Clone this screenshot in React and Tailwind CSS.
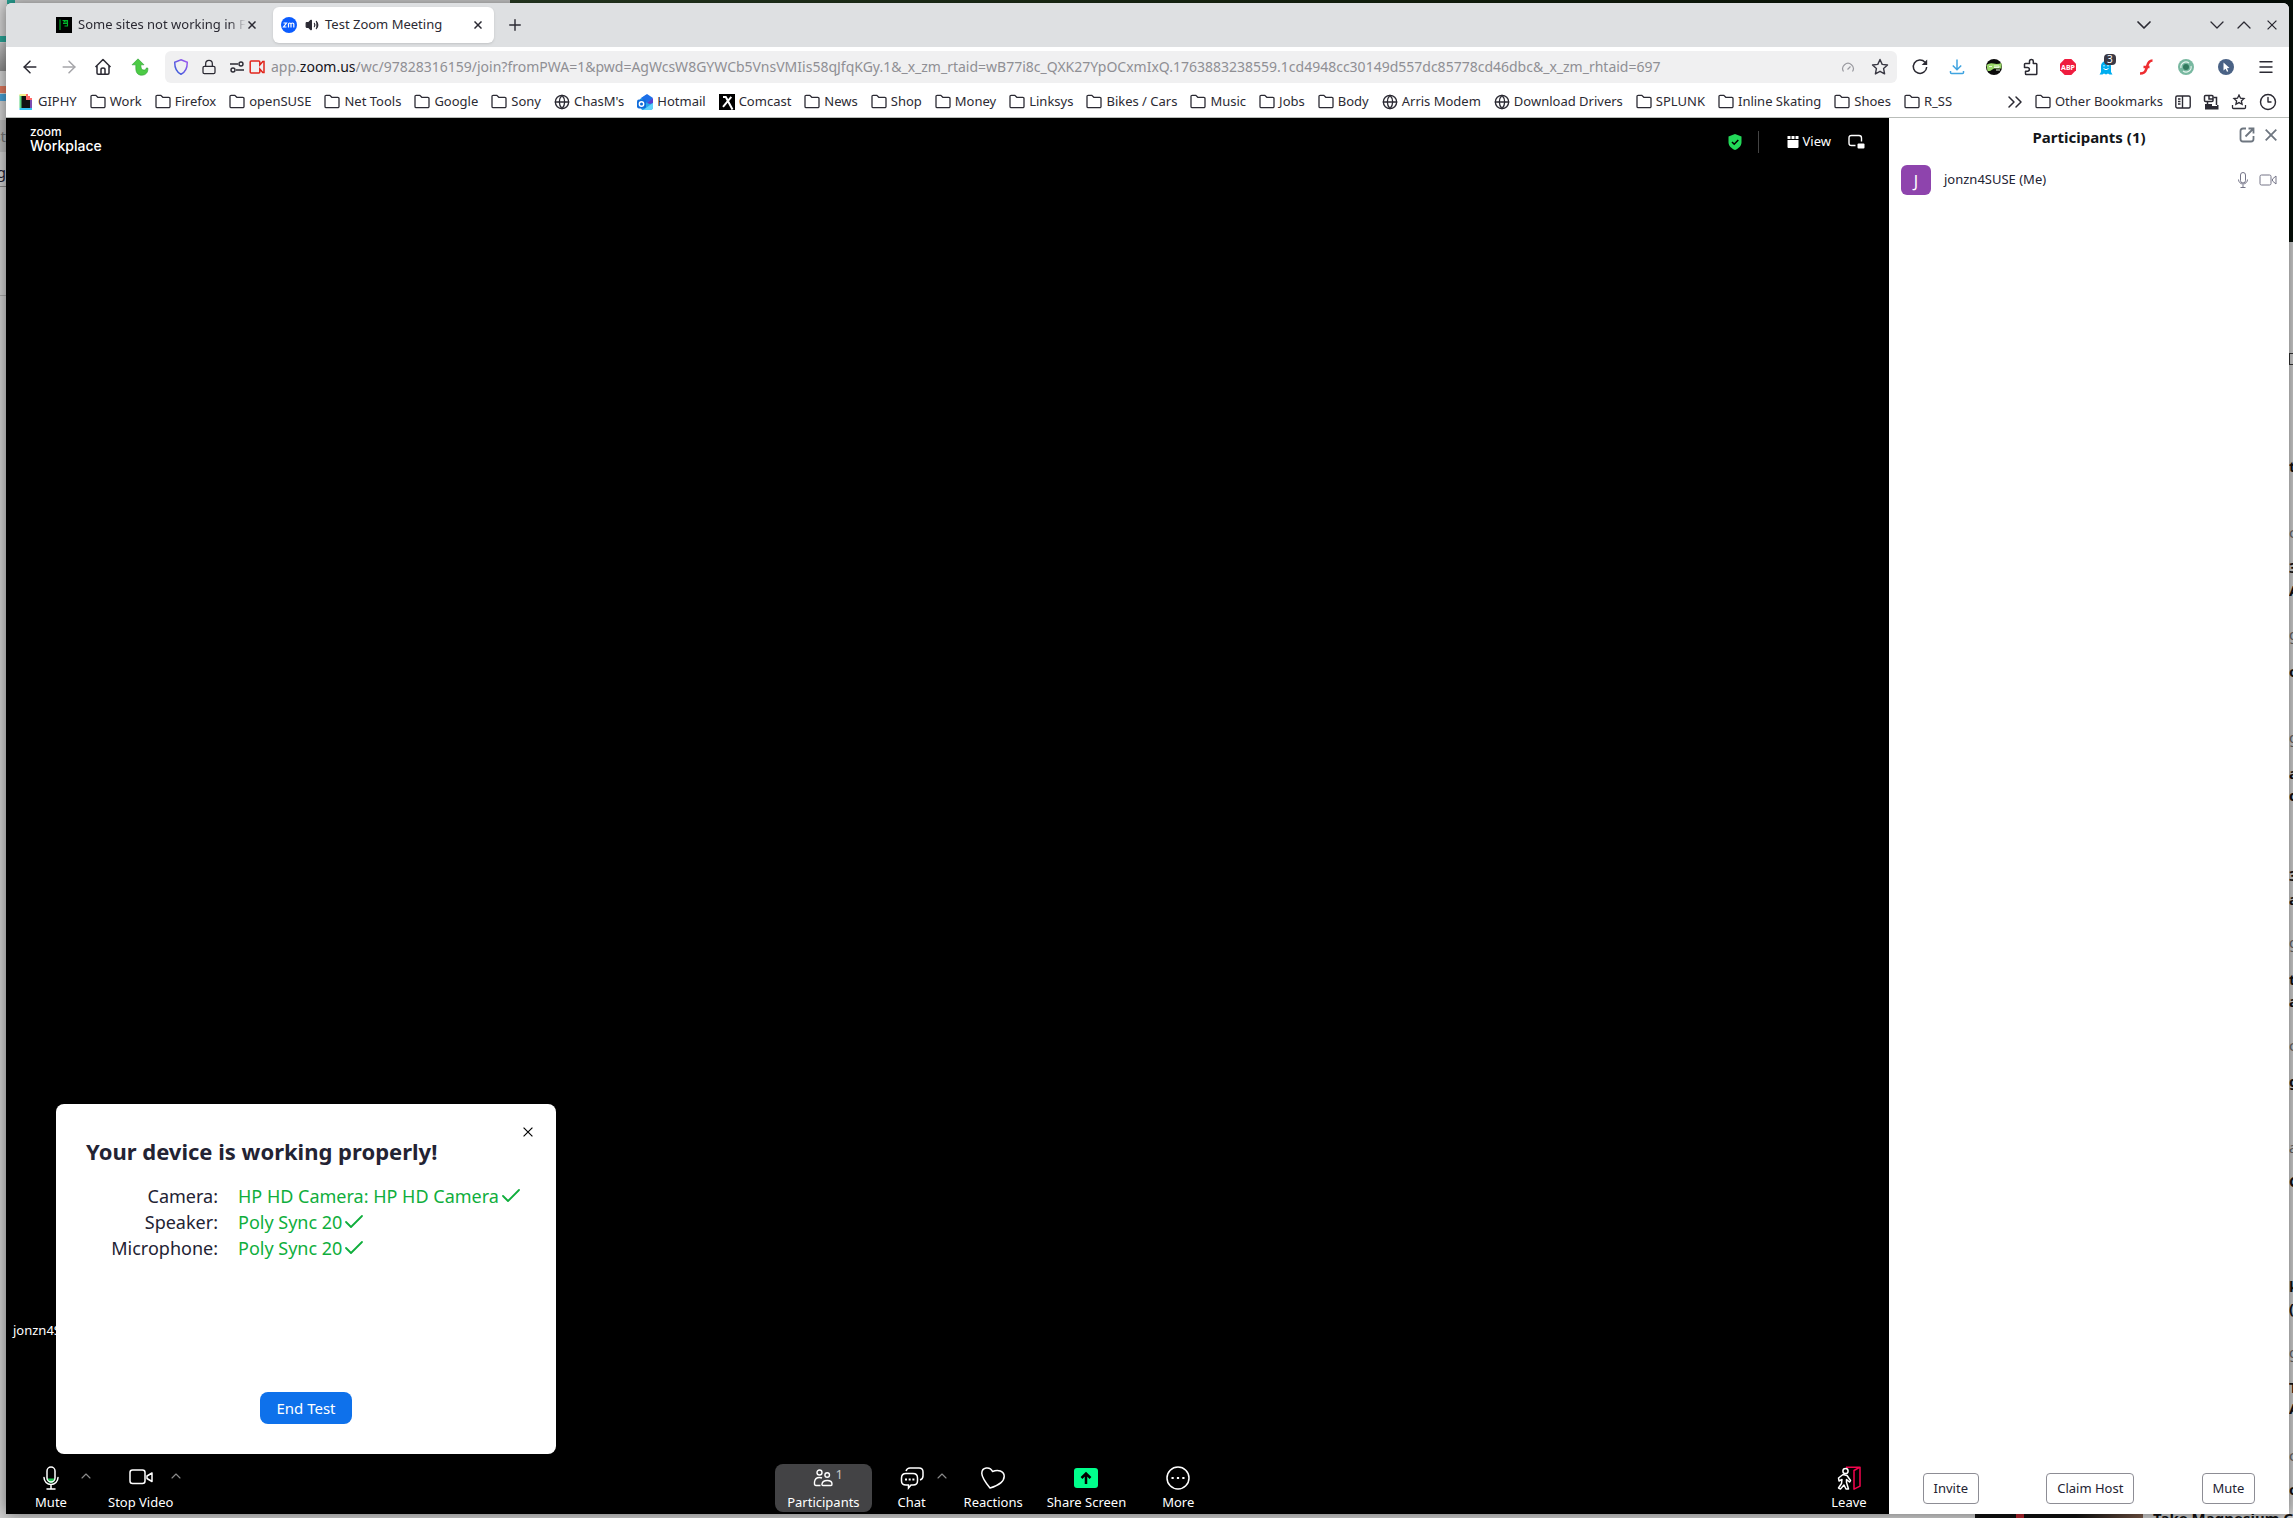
import React from 'react';
import {
  ArrowLeft,
  ArrowRight,
  ChevronDown,
  ChevronUp,
  ChevronsRight,
  Check,
  Clock3,
  Globe,
  Lock,
  Menu,
  Plus,
  Volume2,
} from 'lucide-react';

const BOOKMARKS = [
  { label: 'GIPHY', icon: 'giphy' },
  { label: 'Work' },
  { label: 'Firefox' },
  { label: 'openSUSE' },
  { label: 'Net Tools' },
  { label: 'Google' },
  { label: 'Sony' },
  { label: "ChasM's", icon: 'globe' },
  { label: 'Hotmail', icon: 'hotmail' },
  { label: 'Comcast', icon: 'comcast' },
  { label: 'News' },
  { label: 'Shop' },
  { label: 'Money' },
  { label: 'Linksys' },
  { label: 'Bikes / Cars' },
  { label: 'Music' },
  { label: 'Jobs' },
  { label: 'Body' },
  { label: 'Arris Modem', icon: 'globe' },
  { label: 'Download Drivers', icon: 'globe' },
  { label: 'SPLUNK' },
  { label: 'Inline Skating' },
  { label: 'Shoes' },
  { label: 'R_SS' },
];

const DEVICES = [
  { label: 'Camera:', value: 'HP HD Camera: HP HD Camera' },
  { label: 'Speaker:', value: 'Poly Sync 20' },
  { label: 'Microphone:', value: 'Poly Sync 20' },
];

const URL_PATH =
  '/wc/97828316159/join?fromPWA=1&pwd=AgWcsW8GYWCb5VnsVMIis58qJfqKGy.1&_x_zm_rtaid=wB77i8c_QXK27YpOCxmIxQ.1763883238559.1cd4948cc30149d557dc85778cd46dbc&_x_zm_rhtaid=697';

// text of the window behind, as far as it sticks out on the right: [letter, top, bold]
const BEHIND = [
  ['t', 466, true],
  ['c', 532],
  ['3', 567, true],
  ['A', 590, true],
  ['g', 634],
  ['o', 671, true],
  ['g', 737],
  ['a', 773, true],
  ['d', 795, true],
  ['3', 875, true],
  ['a', 899, true],
  ['g', 942],
  ['t', 979, true],
  ['a', 1001, true],
  ['c', 1045],
  ['g', 1081, true],
  ['a', 1147],
  ['C', 1181, true],
  ['k', 1286, true],
  ['(', 1308, true],
  ['g', 1352],
  ['T', 1387, true],
  ['A', 1408, true],
  ['c', 1455],
  ['o', 1489, true],
];

const Cross = ({ className, strokeWidth = 1.4 }) => (
  <svg className={className} viewBox="0 0 12 12" fill="none" stroke="currentColor" strokeWidth={strokeWidth}>
    <path d="M.7.7l10.600 10.600M11.300.7L.7 11.300" />
  </svg>
);

const Folder = () => (
  <svg className="size-4 shrink-0" viewBox="0 0 16 16" fill="none" stroke="#2b2a33" strokeWidth="1.300">
    <path d="M1 12.500v-10A1.200 1.200 0 0 1 2.200 1.300h3.600l2 2h6A1.200 1.200 0 0 1 15 4.500v8a1.200 1.200 0 0 1-1.200 1.200H2.200A1.200 1.200 0 0 1 1 12.500z" />
  </svg>
);

const Star = () => (
  <svg className="size-[18px]" viewBox="0 0 18 18" fill="none" stroke="#3a3944" strokeWidth="1.400" strokeLinejoin="round">
    <path d="M9 1.500l2.200 4.900 5.300.6-3.900 3.600 1 5.300L9 13.300l-4.600 2.600 1-5.300L1.500 7l5.300-.6z" />
  </svg>
);

const BookmarkIcon = ({ type }) => {
  if (type === 'globe') return <Globe className="size-4 shrink-0" strokeWidth={2} />;
  if (type === 'giphy') {
    return (
      <svg className="size-4 shrink-0" viewBox="0 0 16 16">
        <path fill="#111" d="M3 2h6v4h4v8H3z" />
        <path fill="#5bd37f" d="M1.500 1h2v13h-2z" />
        <path fill="#f6f08a" d="M1.500 0h7v2h-7z" />
        <path fill="#ff6a6a" d="M8 0h2v2h2v2h2v2H8z" />
        <path fill="#7b4bb0" d="M12 6h2v9h-2z" />
        <path fill="#35c3f3" d="M1.500 14h12.500v2H1.500z" />
      </svg>
    );
  }
  if (type === 'hotmail') {
    return (
      <svg className="size-4 shrink-0" viewBox="0 0 16 16">
        <path fill="#28a8ea" d="M3 5l6-4 7 4v8q0 3-3 3H5L3 13z" />
        <path fill="#1d6fe8" d="M4 4l6-4 6 4-6 5z" />
        <path fill="#5b3fd0" d="M10 9l6-5v5l-3 1z" />
        <path fill="#62d2fb" d="M6 16l10-7v4q0 3-3 3z" />
        <rect fill="#0f6cdb" x="0" y="5.500" width="9" height="9" rx="2" />
        <circle cx="4.500" cy="10" r="2.200" fill="none" stroke="#fff" strokeWidth="1.400" />
      </svg>
    );
  }
  if (type === 'comcast') {
    return (
      <svg className="size-4 shrink-0" viewBox="0 0 16 16">
        <rect width="16" height="16" fill="#000" />
        <path d="M4 3h2.800l6.700 12.500M12.300 2.800L4 12.800" fill="none" stroke="#fff" strokeWidth="2" />
      </svg>
    );
  }
  return <Folder />;
};

const TabStrip = () => (
  <div className="flex h-11 shrink-0 items-center bg-[#dee0e2] pl-[50px] pr-3 text-[#2b2a33]">
    <div className="flex w-[217px] items-center gap-1.5">
      <svg className="size-4 shrink-0" viewBox="0 0 16 16">
        <rect width="16" height="16" fill="#000" />
        <path d="M4 2.500v10.500M6.500 3.500h2.500l-1 1.500h3.500M8.500 3.500h3v5.500h-3M7 6.500h4.500" fill="none" stroke="#00b52a" strokeWidth="1.100" />
      </svg>
      <span className="w-[168px] whitespace-nowrap [mask-image:linear-gradient(90deg,#000_90%,transparent_100%)]">
        Some sites not working in F
      </span>
      <button aria-label="Close tab" className="-ml-1">
        <Cross className="size-2" strokeWidth={2.200} />
      </button>
    </div>
    <div className="flex h-9 w-[221px] items-center gap-2 rounded-md bg-white pl-2 pr-3 shadow-sm">
      <svg className="size-4 shrink-0" viewBox="0 0 16 16">
        <circle cx="8" cy="8" r="8" fill="#0b5cff" />
        <path d="M2.500 6h3l-3 4h3M7.500 10.500V7q0-1 1.200-1t1.300 1v3.500M10 7q0-1 1.400-1T12.800 7v3.500" fill="none" stroke="#fff" strokeWidth="1.200" />
      </svg>
      <Volume2 className="size-3.5 shrink-0" fill="currentColor" strokeWidth={2} />
      <span className="-ml-0.5 grow whitespace-nowrap">Test Zoom Meeting</span>
      <button aria-label="Close tab">
        <Cross className="size-2" strokeWidth={2.200} />
      </button>
    </div>
    <button aria-label="New tab" className="ml-3">
      <Plus className="size-[18px]" strokeWidth={1.900} />
    </button>
    <div className="ml-auto flex items-center gap-[3px]">
      <button aria-label="List all tabs" className="mr-[46px]">
        <ChevronDown className="size-6" strokeWidth={1.700} />
      </button>
      <button aria-label="Minimize">
        <ChevronDown className="size-6" strokeWidth={1.300} />
      </button>
      <button aria-label="Maximize">
        <ChevronUp className="size-6" strokeWidth={1.300} />
      </button>
      <button aria-label="Close window" className="ml-2">
        <Cross className="size-2.5" strokeWidth={1.500} />
      </button>
    </div>
  </div>
);

const NavButton = ({ label, wide, children }) => (
  <button aria-label={label} className={`relative flex justify-center ${wide ? 'w-10' : 'w-[37px]'}`}>
    {children}
  </button>
);

const NavBar = () => (
  <div className="flex h-10 shrink-0 items-center bg-white pl-3.5 pr-[3px] text-[#2b2a33]">
    <div className="flex w-[145px] shrink-0 items-center justify-between pr-4">
      <button aria-label="Back">
        <ArrowLeft className="size-5" strokeWidth={1.800} />
      </button>
      <button aria-label="Forward" className="text-[#a5a5a9]">
        <ArrowRight className="size-5" strokeWidth={1.800} />
      </button>
      <button aria-label="Home" className="-ml-1">
        <svg className="size-[18px]" viewBox="0 0 18 18" fill="none" stroke="#2b2a33" strokeWidth="1.500" strokeLinejoin="round">
          <path d="M1.500 9L9 1.500 16.500 9M3 8v7q0 1.200 1.200 1.200h9.600q1.200 0 1.200-1.200V8M7 16v-4.500q0-1.500 2-1.500t2 1.500V16" />
        </svg>
      </button>
      <button aria-label="Go up">
        <svg className="size-[18px]" viewBox="0 0 18 18">
          <path d="M7 .8l6 6H9.800c0 3.500 1 5.200 3 5.200 1.500 0 2.400-.6 2.400-2h1.600c.6 4.500-2.200 7.200-6 7.200-4 0-6-2.500-6-7V6.800H1z" fill="#4ccb45" stroke="#2e9e35" strokeWidth=".6" />
        </svg>
      </button>
    </div>
    <div className="flex h-8 grow items-center rounded-md bg-[#f0f0f1] px-2">
      <div className="mr-1.5 flex shrink-0 items-center">
        <svg className="size-4" viewBox="0 0 16 16" fill="none" stroke="url(#shield)" strokeWidth="1.500">
          <defs>
            <linearGradient id="shield" x1="0" y1="1" x2="1" y2="0">
              <stop offset="0" stopColor="#2f5fd8" />
              <stop offset="1" stopColor="#a257f0" />
            </linearGradient>
          </defs>
          <path d="M8 .8l6.300 2.400c0 5.800-1.500 9.800-6.300 12-4.800-2.200-6.300-6.200-6.300-12z" />
        </svg>
        <Lock className="ml-3 size-4" strokeWidth={1.900} />
        <svg className="ml-3 size-4" viewBox="0 0 16 16" fill="none" stroke="#2b2a33" strokeWidth="1.400">
          <path d="M1 5h8M7 11h8" />
          <circle cx="12" cy="5" r="2" />
          <circle cx="4" cy="11" r="2" />
        </svg>
        <svg className="ml-1 size-4" viewBox="0 0 16 16" fill="none" stroke="#e1251b" strokeWidth="1.500">
          <path d="M2.200 2h7.600q1 0 1 1v3l3-3.500h1.200v11h-1.200l-3-3.500v3q0 1-1 1H2.200q-1 0-1-1V3q0-1 1-1z" />
        </svg>
      </div>
      <label htmlFor="address" className="whitespace-nowrap text-sm text-[#8f8f94]">
        app.<span className="text-[#15141a]">zoom.us</span>
      </label>
      <input id="address" type="text" defaultValue={URL_PATH} className="min-w-0 grow bg-transparent text-sm text-[#8f8f94] outline-none" />
      <svg className="mr-4 size-3.5 shrink-0" viewBox="0 0 14 14" fill="none" stroke="#9a9aa0" strokeWidth="1.200">
        <path d="M2.500 11.500a5.300 5.300 0 1 1 9 0M6.500 9.500l3-3" />
      </svg>
      <button aria-label="Bookmark this page">
        <Star />
      </button>
    </div>
    <div className="ml-1 flex shrink-0 items-center">
      <NavButton label="Reload">
        <svg className="size-[18px]" viewBox="0 0 18 18" fill="none" stroke="#2b2a33" strokeWidth="1.500">
          <path d="M14 4.200A6.700 6.700 0 1 0 15.700 9" />
          <path d="M16.200 1.500v5.500h-5.500z" fill="#2b2a33" stroke="none" />
        </svg>
      </NavButton>
      <NavButton label="Downloads">
        <svg className="size-4" viewBox="0 0 16 16" fill="none" stroke="#3fa3e0" strokeWidth="1.500">
          <path d="M8 .5v10M3.800 6.500L8 10.700l4.200-4.200M1.500 12v1.500q0 1 1 1h11q1 0 1-1V12" />
        </svg>
      </NavButton>
      <NavButton label="Session manager">
        <svg className="size-4" viewBox="0 0 16 16">
          <circle cx="8" cy="8" r="8" fill="#0b0b0b" />
          <path d="M.5 6q3-2.500 7-1.500t8-.5v5.500H8l-4 2.500H1.500z" fill="#9bd86a" />
          <path d="M3 7.500h3M8 7h5v1.500H8M10 11h4" fill="none" stroke="#e9f7df" />
        </svg>
      </NavButton>
      <NavButton label="Extensions">
        <svg className="size-[18px]" viewBox="0 0 18 18" fill="none" stroke="#2b2a33" strokeWidth="1.500" strokeLinejoin="round">
          <path d="M7.500 5.500V3.300a1.900 1.900 0 0 1 3.800 0v2.200H14q.8 0 .8.800v9.400q0 .8-.8.800H4.300q-.8 0-.8-.8v-2.500h2a1.900 1.900 0 0 0 0-3.800H2.500V6.300q0-.8.800-.8z" />
        </svg>
      </NavButton>
      <NavButton label="Adblock Plus">
        <svg className="size-4" viewBox="0 0 16 16">
          <path d="M4.700 0h6.600L16 4.700v6.600L11.300 16H4.700L0 11.300V4.700z" fill="#ef1c3f" />
          <text x="8" y="10.500" textAnchor="middle" fontSize="7" fontWeight="700" fill="#fff">
            ABP
          </text>
        </svg>
      </NavButton>
      <NavButton label="Ghostery" wide>
        <svg className="size-4" viewBox="0 0 16 16">
          <path d="M3 13V7a5 5 0 0 1 10 0v6l1.500 2.500h-3L10 14.500l-2 1-2-1-1.500 1h-3z" fill="#00aef0" />
          <path d="M5.500 9.500q2.500 2.500 5 0" fill="none" stroke="#fff" />
          <path d="M6 6v1.500M10 6v1.500" stroke="#fff" />
        </svg>
        <span className="absolute -top-[5px] left-[18px] rounded-sm bg-[#3a3944] px-[3px] text-[10px] leading-[11px] text-white">3</span>
      </NavButton>
      <NavButton label="Flash video downloader" wide>
        <svg className="size-4" viewBox="0 0 16 16" fill="none" stroke="#ee2c30" strokeWidth="2.600">
          <path d="M14.500 1.500c-5 0-5 5-6 8s-2 5-6.500 5M5.500 8h6" />
        </svg>
      </NavButton>
      <NavButton label="Sync" wide>
        <svg className="size-4" viewBox="0 0 16 16">
          <circle cx="8" cy="8" r="8" fill="#78b8a0" />
          <circle cx="8" cy="8" r="3" fill="#32795e" />
          <path d="M3 9a5 5 0 0 1 8-5M13 7a5 5 0 0 1-8 5" fill="none" stroke="#e4f3ed" strokeWidth="1.200" />
        </svg>
      </NavButton>
      <NavButton label="Pointer" wide>
        <svg className="size-4" viewBox="0 0 16 16">
          <circle cx="8" cy="8" r="8" fill="#4a6285" />
          <path d="M5.500 3.500l6 5.500-2.600.2 1.400 3-1.300.6-1.400-3-2.100 1.600z" fill="#fff" />
        </svg>
      </NavButton>
      <NavButton label="Menu" wide>
        <Menu className="size-[18px]" strokeWidth={1.900} />
      </NavButton>
    </div>
  </div>
);

const BookmarksBar = () => (
  <div className="flex h-[31px] shrink-0 items-center border-b border-[#b9bdb9] bg-white px-3 text-[#2b2a33]">
    <div className="flex gap-[13px]">
      {BOOKMARKS.map(({ label, icon }) => (
        <a key={label} href="#" className="flex items-center gap-1 whitespace-nowrap">
          <BookmarkIcon type={icon} />
          {label}
        </a>
      ))}
    </div>
    <div className="ml-auto flex items-center gap-3">
      <button aria-label="More bookmarks" className="-mr-1">
        <ChevronsRight className="size-6" strokeWidth={1.500} />
      </button>
      <a href="#" className="flex items-center gap-1 whitespace-nowrap">
        <Folder />
        Other Bookmarks
      </a>
      <button aria-label="Sidebar">
        <svg className="size-4" viewBox="0 0 16 16" fill="none" stroke="#2b2a33" strokeWidth="1.400">
          <rect x=".8" y="2" width="14.400" height="12" rx="1.500" />
          <path d="M7.500 2v12M3 5h2.500M3 7.500h2.500M3 10h2.500" />
        </svg>
      </button>
      <button aria-label="Containers">
        <svg className="size-4" viewBox="0 0 16 16" fill="none" stroke="#2b2a33" strokeWidth="1.500">
          <rect x="1.500" y="1.500" width="8.500" height="6" rx="1" />
          <path d="M6 1.500v3.500h4M10.500 3.500h3V11M4.500 8v3" />
          <path d="M2 10h7v2h5V11h1.500v4.500H2z" fill="#2b2a33" stroke="none" />
        </svg>
      </button>
      <button aria-label="Show bookmarks">
        <svg className="size-4" viewBox="0 0 16 16" fill="none" stroke="#2b2a33" strokeWidth="1.300">
          <path d="M8 1l1.500 3.200 3.500.4-2.600 2.300.7 3.400L8 8.600l-3.100 1.700.7-3.400L3 4.600l3.500-.4zM1.500 11v2.500q0 1 1 1h11q1 0 1-1V11" />
        </svg>
      </button>
      <button aria-label="History">
        <Clock3 className="size-[18px]" strokeWidth={1.900} />
      </button>
    </div>
  </div>
);

const MicIcon = () => (
  <svg className="h-6 w-5" viewBox="0 0 20 24" fill="none" stroke="#fff" strokeWidth="1.500" strokeLinecap="round">
    <path d="M6.500 12.500h7v1a3.500 3.500 0 0 1-7 0z" fill="#23c552" stroke="none" />
    <rect x="6" y="1" width="8" height="15" rx="4" />
    <path d="M3 11.500a7 7 0 0 0 14 0M10 19v4M6 23h8" />
  </svg>
);

const VideoIcon = () => (
  <svg className="h-6 w-6" viewBox="0 0 24 24" fill="none" stroke="#fff" strokeWidth="1.500" strokeLinejoin="round">
    <rect x="1" y="4" width="15" height="13.500" rx="2.500" />
    <path d="M18 10l5-3v8.500l-5-3z" />
  </svg>
);

const ToolButton = ({ label, active, children }) => (
  <button
    className={`flex h-12 min-w-20 shrink-0 flex-col items-center justify-between rounded-lg px-3 pb-0.5 pt-0.5 text-white ${
      active ? 'bg-[#434345]' : ''
    }`}
  >
    <span className="relative flex h-6 items-center">{children}</span>
    <span className="leading-4">{label}</span>
  </button>
);

// sits over the right edge of the button before it
const Caret = ({ label, className = '-ml-[18px] mr-0.5' }) => (
  <button aria-label={label} className={`relative mt-1 self-start text-[#8b8b8b] ${className}`}>
    <ChevronUp className="size-4" strokeWidth={1.700} />
  </button>
);

const MeetingToolbar = () => (
  <div className="flex h-[50px] items-start justify-between">
    <div className="flex pl-[5px]">
      <ToolButton label="Mute">
        <MicIcon />
      </ToolButton>
      <Caret label="Audio options" className="-ml-[13px] mr-0.5" />
      <ToolButton label="Stop Video">
        <VideoIcon />
      </ToolButton>
      <Caret label="Video options" className="-ml-[17px]" />
    </div>
    <div className="flex">
      <ToolButton label="Participants" active>
        <svg className="h-[18px] w-5" viewBox="0 0 20 18" fill="none" stroke="#fff" strokeWidth="1.400">
          <circle cx="6.500" cy="3.500" r="2.500" />
          <circle cx="14.200" cy="6" r="2.300" />
          <path d="M7.500 16.500H3q-1.500 0-1.500-1.500v-2q.5-4.500 5-4.500 1.500 0 2.500.5M10 16.500q-1.200 0-1-1.500.5-3.500 5.200-3.500t4.800 3.500q0 1.500-1 1.500z" />
        </svg>
        <span className="absolute left-full top-0 ml-0.5 text-[#c8c8c8] leading-4">1</span>
      </ToolButton>
      <ToolButton label="Chat">
        <svg className="size-6" viewBox="0 0 24 24" fill="none" stroke="#fff" strokeWidth="1.500">
          <path d="M6 5q1-3 4-3h9q4 0 4 4v4q0 3-3 4" />
          <path d="M6 7.500h7q4.500 0 4.500 4.500v3q0 4-4.500 4h-2l-2.500 3v-3H6q-4.500 0-4.500-4v-3q0-4.500 4.500-4.500z" />
          <path d="M5 13.500h2M8.700 13.500h2M12.400 13.500h2" strokeWidth="2" />
        </svg>
      </ToolButton>
      <Caret label="Chat options" />
      <ToolButton label="Reactions">
        <svg className="size-6" viewBox="0 0 24 24" fill="none" stroke="#fff" strokeWidth="1.500" strokeLinejoin="round">
          <path d="M9 22C4.500 16.500 1 12 .8 7.500.6 1 9 0 11.500 5.500 17 3 23 5 23.200 10c.1 6-6.200 9.500-14.200 12z" />
        </svg>
      </ToolButton>
      <ToolButton label="Share Screen">
        <svg className="size-6" viewBox="0 0 24 24">
          <rect y="2" width="24" height="20" rx="3" fill="#00ff8c" />
          <path d="M12 18V8M7.500 12L12 7.500l4.500 4.500" fill="none" stroke="#000" strokeWidth="2.500" />
        </svg>
      </ToolButton>
      <ToolButton label="More">
        <svg className="size-6" viewBox="0 0 24 24" fill="none" stroke="#fff" strokeWidth="1.500">
          <circle cx="12" cy="12" r="11" />
          <path d="M5.500 12h2.200M10.900 12h2.200M16.300 12h2.200" strokeWidth="2.200" />
        </svg>
      </ToolButton>
    </div>
    <ToolButton label="Leave">
      <svg className="size-6" viewBox="0 0 24 24" fill="none" strokeWidth="1.500" strokeLinejoin="round">
        <path d="M9 1.200h14v19l-6 3V4.500l6-3.300" stroke="#f5054f" />
        <circle cx="8.500" cy="5" r="2.600" stroke="#fff" />
        <path d="M6 8.500L1.500 12l.5 3L5 13.500l-.5 4L1.500 22l2 1 3.500-4 2 4h2.500l-2-6.500v-3l3 2.500 1-1.500-3.500-5z" stroke="#fff" />
      </svg>
    </ToolButton>
  </div>
);

const DeviceTestDialog = () => (
  <section className="absolute bottom-[60px] left-[50px] flex h-[350px] w-[500px] flex-col items-center rounded-lg bg-white px-[30px] pb-[30px] pt-[29px] text-[#232333]">
    <button aria-label="Close" className="absolute right-[23px] top-[23px] text-black">
      <Cross className="size-2.5" strokeWidth={1.400} />
    </button>
    <h2 className="self-start text-[22px] font-bold leading-9">Your device is working properly!</h2>
    <dl className="mt-[14px] grid w-full grid-cols-[132px_1fr] gap-x-5 text-[18px] leading-[26px]">
      {DEVICES.map(({ label, value }) => (
        <React.Fragment key={label}>
          <dt className="text-right">{label}</dt>
          <dd className="flex items-center whitespace-nowrap text-[#0fae3c]">
            {value}
            <Check className="size-6" strokeWidth={1.800} />
          </dd>
        </React.Fragment>
      ))}
    </dl>
    <button className="mt-auto h-8 rounded-lg bg-[#0e71eb] px-4 text-[15px] text-white">End Test</button>
  </section>
);

const Meeting = () => (
  <main className="relative flex grow flex-col justify-between bg-black text-white">
    <header className="flex items-start justify-between pl-6 pr-6">
      <div className="flex flex-col pt-2 font-['Inter',sans-serif] font-medium leading-4">
        <span className="text-xs leading-3">zoom</span>
        <span className="text-sm leading-4">Workplace</span>
      </div>
      <div className="flex h-12 items-center">
        <svg className="size-4" viewBox="0 0 16 16">
          <path d="M8 0l6.500 2.500V8c0 4-3 6.500-6.500 8-3.500-1.500-6.500-4-6.500-8V2.500z" fill="#23d959" />
          <path d="M5 8l2.200 2.200L11.300 6" fill="none" stroke="#000" strokeWidth="1.600" />
        </svg>
        <span className="ml-[15px] mr-7 h-[22px] w-px bg-[#444]" />
        <button className="flex items-center gap-1">
          <svg className="size-3" viewBox="0 0 12 12" fill="#fff">
            <path d="M.5 0h3v3h-3zM4.500 0h3v3h-3zM8.500 0h3v3h-3zM.5 4h11v7q0 1-1 1h-9q-1 0-1-1z" />
          </svg>
          View
        </button>
        <button aria-label="Picture in picture" className="ml-4">
          <svg className="size-[18px]" viewBox="0 0 18 18" fill="none" stroke="#fff" strokeWidth="1.400">
            <path d="M8.500 12.500H4.500q-2.500 0-2.500-2.500V5Q2 2.500 4.500 2.500h7.500Q14.500 2.500 14.500 5v3.500" />
            <rect x="10.500" y="10.500" width="7" height="5" rx="1" fill="#fff" stroke="none" />
          </svg>
        </button>
      </div>
    </header>
    <div>
      <p className="mb-[124px] whitespace-nowrap pl-[7px] leading-5">jonzn4SUSE</p>
      <MeetingToolbar />
    </div>
    <DeviceTestDialog />
  </main>
);

const ParticipantsPanel = () => (
  <aside className="flex w-[400px] shrink-0 flex-col bg-white text-[#232333]">
    <div className="relative flex h-[38px] items-center justify-center">
      <h2 className="text-[15px] font-bold text-[#131619]">Participants (1)</h2>
      <div className="absolute right-3 top-[9px] flex items-center gap-2.5 text-[#6e7680]">
        <button aria-label="Pop out">
          <svg className="size-4" viewBox="0 0 16 16" fill="none" stroke="currentColor" strokeWidth="1.800">
            <path d="M7 1.500H4Q1.500 1.500 1.500 4v8Q1.500 14.500 4 14.500h8q2.500 0 2.500-2.500V9M9.500 1.500h5v5M14.500 1.500L6.500 9.500" />
          </svg>
        </button>
        <button aria-label="Close panel">
          <Cross className="size-3" strokeWidth={1.800} />
        </button>
      </div>
    </div>
    <ul>
      <li className="flex h-12 items-center px-3">
        <span className="flex size-[30px] items-center justify-center rounded-md bg-[#8e44ad] pt-0.5 text-base text-white">J</span>
        <span className="ml-[13px] grow">jonzn4SUSE (Me)</span>
        <svg className="size-4" viewBox="0 0 16 16" fill="none" stroke="#747487">
          <rect x="5.500" y=".5" width="5" height="10.500" rx="2.500" />
          <path d="M3.500 7.500a4.500 4.500 0 0 0 9 0M8 12.500v3M5.500 15.500h5" />
        </svg>
        <svg className="ml-2 h-4 w-[18px]" viewBox="0 0 18 16" fill="none" stroke="#747487">
          <rect x="1" y="3" width="11" height="10" rx="1.500" />
          <path d="M13.500 7l3.500-3v8l-3.500-3z" />
        </svg>
      </li>
    </ul>
    <div className="mb-2.5 mt-auto flex justify-around">
      {['Invite', 'Claim Host', 'Mute'].map((label) => (
        <button key={label} className="h-[31px] rounded border border-[#8d8d95] px-2.5">
          {label}
        </button>
      ))}
    </div>
  </aside>
);

// whatever shows round the browser window: wallpaper and an older window
const Desktop = () => (
  <div aria-hidden="true" className="absolute inset-0 overflow-hidden bg-[#d2d2d2]">
    <div className="absolute left-[510px] right-0 top-0 h-1 bg-linear-to-r from-[#2a3f25] via-[#15240f] to-[#050d06]" />
    <div className="absolute left-[7px] top-0 h-1 w-2 bg-[#2aa597]" />
    <div className="absolute right-0 top-0 h-[242px] w-2 bg-[#07100a]" />
    <div className="absolute left-0 top-9 h-1.5 w-2 bg-[#2aa597]" />
    <div className="absolute left-0 top-[43px] h-7 w-2 bg-linear-to-b from-[#c4c4c4] to-[#8a8a8a]" />
    <div className="absolute left-0 top-[86px] h-[7px] w-2 bg-[#e07a5f]" />
    <div className="absolute left-0 top-[94px] h-[7px] w-2 bg-[#4aa3d8]" />
    <div className="absolute left-0 top-[120px] h-8 w-2 bg-[#bdbdbd]" />
    <span className="absolute right-full top-[126px] -mr-1.5 text-[15px] leading-5 text-[#777]">st</span>
    <span className="absolute right-full top-[162px] -mr-1.5 text-[15px] leading-5 text-[#223]">og</span>
    <div className="absolute left-0 top-[186px] h-px w-2 bg-[#888]" />
    <div className="absolute left-0 top-[295px] h-px w-2 bg-[#aaa]" />
    <div className="absolute right-0 top-[353px] h-3 w-1 border-y border-l border-[#333]" />
    <div className="absolute bottom-0 left-[1975px] h-1 w-[168px] bg-linear-to-r from-[#111] from-60% to-[#7a5a48]" />
    <div className="absolute bottom-0 left-[2016px] h-1 w-2 bg-[#b3262e]" />
    <span className="absolute left-[2153px] top-[1508px] whitespace-nowrap text-[15px] font-bold leading-5 text-[#111]">
      Take Magnesium Giv
    </span>
    {BEHIND.map(([letter, top, bold]) => (
      <span
        key={top}
        className={`absolute right-0 w-1 -translate-y-1/2 text-[15px] leading-5 ${
          bold ? 'font-bold text-[#111]' : 'text-[#666]'
        }`}
        style={{ top }}
      >
        {letter}
      </span>
    ))}
  </div>
);

export default function App() {
  return (
    <div className="relative flex h-screen flex-col overflow-hidden pb-1 pl-1.5 pr-1 pt-[3px] font-['Noto_Sans',sans-serif] text-[13px]">
      <Desktop />
      <div className="relative flex grow flex-col overflow-hidden rounded-t-md bg-white shadow-[0_0_16px_rgba(0,0,0,0.5)]">
        <TabStrip />
        <NavBar />
        <BookmarksBar />
        <div className="flex grow">
          <Meeting />
          <ParticipantsPanel />
        </div>
      </div>
    </div>
  );
}
